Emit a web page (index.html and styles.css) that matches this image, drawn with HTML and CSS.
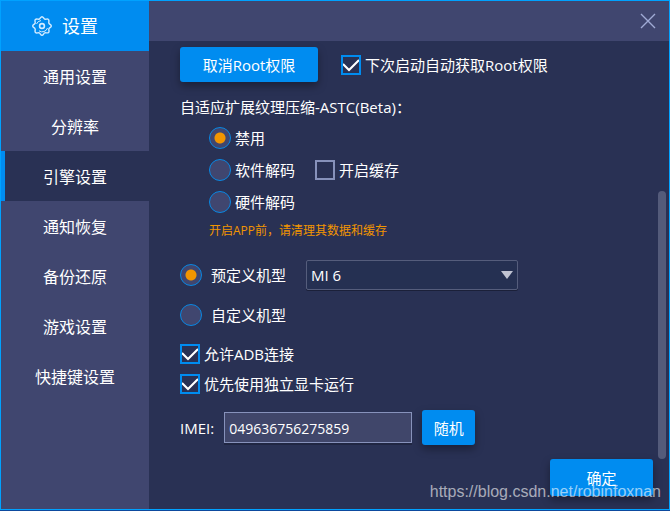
FILE: index.html
```html
<!DOCTYPE html>
<html lang="zh-CN">
<head>
  <meta charset="UTF-8">
  <meta name="viewport" content="width=device-width, initial-scale=1.0">
  <title>设置</title>
  <link rel="stylesheet" href="styles.css">
</head>
<body>
  <div class="window">
    <aside class="sidebar">
      <h1 class="sidebar-title">
        <svg class="gear" viewBox="0 0 20 20" width="20" height="20" fill="none" stroke="currentColor">
          <path d="M10 .7 C11.4 .7 11.6 2.7 12.7 3.1 C13.8 3.6 15.4 2.3 16.4 3.4 C17.6 4.6 16.4 6 16.9 7.2 C17.3 8.4 19.3 8.5 19.3 10 C19.3 11.4 17.3 11.6 16.9 12.7 C16.4 13.8 17.7 15.4 16.6 16.4 C15.4 17.6 13.8 16.4 12.7 16.9 C11.6 17.3 11.4 19.3 10 19.3 C8.6 19.3 8.4 17.3 7.3 16.9 C6.2 16.4 4.6 17.7 3.5 16.6 C2.4 15.4 3.6 13.8 3.1 12.7 C2.7 11.6 .7 11.4 .7 10 C.7 8.6 2.7 8.4 3.1 7.3 C3.6 6.2 2.3 4.6 3.4 3.5 C4.6 2.4 6.2 3.6 7.3 3.1 C8.4 2.7 8.6 .7 10 .7 Z" stroke-width="1.4"/>
          <circle cx="10" cy="10" r="2.4" stroke-width="1.6"/>
          <path d="M4.5 8 A5.5 5.5 0 0 1 9 4.6 M15.5 12 A5.5 5.5 0 0 1 7 14.8" stroke-width="1"/>
        </svg>
        设置
      </h1>
      <nav class="menu">
        <a href="#general">通用设置</a>
        <a href="#resolution">分辨率</a>
        <a href="#engine" class="active">引擎设置</a>
        <a href="#notify">通知恢复</a>
        <a href="#backup">备份还原</a>
        <a href="#game">游戏设置</a>
        <a href="#hotkey">快捷键设置</a>
      </nav>
    </aside>

    <main class="main">
      <header class="titlebar">
        <button class="close" type="button" aria-label="关闭">
          <svg viewBox="0 0 16 16" width="16" height="16" fill="none" stroke="currentColor" stroke-width="1.4">
            <path d="M1 1 L15 15 M15 1 L1 15"/>
          </svg>
        </button>
      </header>

      <div class="content">
        <form class="settings">
          <div class="row row-root">
            <button class="btn btn-root" type="button">取消Root权限</button>
            <label class="check"><input type="checkbox" checked>下次启动自动获取Root权限</label>
          </div>

          <h2 class="section-title">自适应扩展纹理压缩-ASTC(Beta)：</h2>
          <div class="options">
            <div class="option">
              <label class="radio"><input type="radio" name="astc" checked>禁用</label>
            </div>
            <div class="option">
              <label class="radio"><input type="radio" name="astc">软件解码</label>
              <label class="check"><input type="checkbox">开启缓存</label>
            </div>
            <div class="option">
              <label class="radio"><input type="radio" name="astc">硬件解码</label>
            </div>
            <p class="hint">开启APP前，请清理其数据和缓存</p>
          </div>

          <div class="models">
            <div class="model">
              <label class="radio"><input type="radio" name="model" checked>预定义机型</label>
              <div class="select">
                <select aria-label="预定义机型">
                  <option>MI 6</option>
                </select>
                <svg class="arrow" viewBox="0 0 12 8" width="12" height="8"><path d="M0 0 H12 L6 8 Z" fill="currentColor"/></svg>
              </div>
            </div>
            <div class="model">
              <label class="radio"><input type="radio" name="model">自定义机型</label>
            </div>
          </div>

          <div class="checks">
            <label class="check"><input type="checkbox" checked>允许ADB连接</label>
            <label class="check"><input type="checkbox" checked>优先使用独立显卡运行</label>
          </div>

          <div class="row row-imei">
            <label for="imei">IMEI:</label>
            <input class="text" id="imei" type="text" value="049636756275859">
            <button class="btn btn-random" type="button">随机</button>
          </div>
        </form>
        <div class="scrollbar"><div class="thumb"></div></div>
      </div>

      <footer class="footer">
        <button class="btn btn-ok" type="button">确定</button>
      </footer>
    </main>

    <span class="watermark">https://blog.csdn.net/robinfoxnan</span>
  </div>
</body>
</html>
```

FILE: styles.css
```css
* {
  box-sizing: border-box;
}

body {
  margin: 0;
  padding-bottom: 1px;
  min-height: 100vh;
  display: flex;
  background: #0d4a9e;
  color: #fff;
  font-family: "Open Sans", "Noto Sans CJK SC", sans-serif;
  font-size: 15px;
  line-height: 20px;
}

button, input, select {
  font: inherit;
  color: inherit;
  margin: 0;
}

.window {
  position: relative;
  flex: 1;
  display: flex;
  border: 1px solid #00a2ff;
  background: #293154;
}

/* sidebar */
.sidebar {
  flex: 0 0 148px;
  background: #40466f;
}

.sidebar-title {
  display: flex;
  align-items: center;
  gap: 10px;
  height: 50px;
  margin: 0;
  padding-left: 31px;
  background: #008cf0;
  font-size: 18px;
  font-weight: normal;
}

.gear {
  color: #d4ecff;
}

.menu a {
  display: flex;
  align-items: center;
  justify-content: center;
  height: 50px;
  padding-top: 2px;
  color: #fff;
  font-size: 16px;
  text-decoration: none;
}

.menu a.active {
  background: #293154;
  box-shadow: inset 4px 0 #008cf0;
}

/* main */
.main {
  flex: 1;
  display: flex;
  flex-direction: column;
}

.titlebar {
  display: flex;
  align-items: center;
  justify-content: flex-end;
  height: 40px;
  padding-right: 13px;
  background: #40466f;
}

.close {
  display: flex;
  padding: 0;
  border: 0;
  background: none;
  color: #a0abd6;
}

.content {
  flex: 1;
  display: flex;
}

.settings {
  flex: 1;
  padding: 6px 0 0 31px;
}

.scrollbar {
  display: flex;
  flex-direction: column;
  justify-content: flex-end;
  width: 8px;
  margin-right: 3px;
}

.thumb {
  height: 64%;
  border-radius: 4px;
  background: #545b7a;
}

.row {
  display: flex;
  align-items: center;
}

.btn {
  height: 35px;
  padding: 0;
  border: 0;
  border-radius: 3px;
  background: #008cf0;
  box-shadow: 0 4px 8px rgba(0, 0, 0, 0.35);
}

.row-root {
  gap: 23px;
}

.btn-root {
  width: 138px;
}

.section-title {
  margin: 15px 0 5px;
  font-size: 15px;
  font-weight: normal;
}

.check,
.radio {
  display: flex;
  align-items: center;
  gap: 4px;
}

.check input,
.radio input {
  appearance: none;
  flex: none;
}

.check input {
  width: 20px;
  height: 20px;
  border: 2px solid #8792bb;
}

.check input:checked {
  border-color: #008cf0;
  background: url("data:image/svg+xml,%3Csvg xmlns='http://www.w3.org/2000/svg' viewBox='0 0 16 16'%3E%3Cpath d='M0 7 L6 13 L16 3' fill='none' stroke='white' stroke-width='2'/%3E%3C/svg%3E") center / 16px 16px no-repeat;
}

.radio input {
  width: 22px;
  height: 22px;
  border: 1px solid #0888e4;
  border-radius: 50%;
  background: #40466f;
}

.radio input:checked {
  background: radial-gradient(circle, #f29500 5px, #40466f 6px);
}

.options {
  padding-left: 29px;
}

.option {
  display: flex;
  align-items: center;
  gap: 20px;
  height: 32px;
}

.hint {
  margin: 0;
  color: #f29500;
  font-size: 12px;
  line-height: 26px;
}

.models {
  margin-top: 11px;
}

.model {
  display: flex;
  align-items: center;
  gap: 20px;
  height: 40px;
}

.model .radio {
  gap: 9px;
}

.select {
  position: relative;
  flex: 0 1 212px;
}

.select select {
  appearance: none;
  display: block;
  width: 100%;
  height: 30px;
  padding: 0 24px 0 4px;
  border: 1px solid #555d7c;
  border-radius: 2px;
  background: #253052;
  box-shadow: 0 1px #1b2039;
}

.arrow {
  position: absolute;
  right: 5px;
  top: 11px;
  color: #c0c3d2;
  pointer-events: none;
}

.checks {
  margin-top: 4px;
}

.checks .check {
  height: 30px;
}

.row-imei {
  gap: 10px;
  margin-top: 11px;
}

.text {
  flex: 0 1 188px;
  min-width: 0;
  height: 31px;
  padding: 2px 4px 0;
  border: 1px solid #8792bb;
  background: #40466a;
  box-shadow: 0 2px #202642;
  font-size: 14px;
}

.btn-random {
  width: 53px;
}

.footer {
  display: flex;
  justify-content: flex-end;
  height: 50px;
  padding-right: 16px;
}

.btn-ok {
  width: 103px;
  height: 37px;
}

.watermark {
  position: absolute;
  right: 8px;
  bottom: 7px;
  color: rgba(255, 255, 255, 0.6);
  font-family: "Liberation Sans", Arial, sans-serif;
  font-size: 16px;
  pointer-events: none;
}
```
